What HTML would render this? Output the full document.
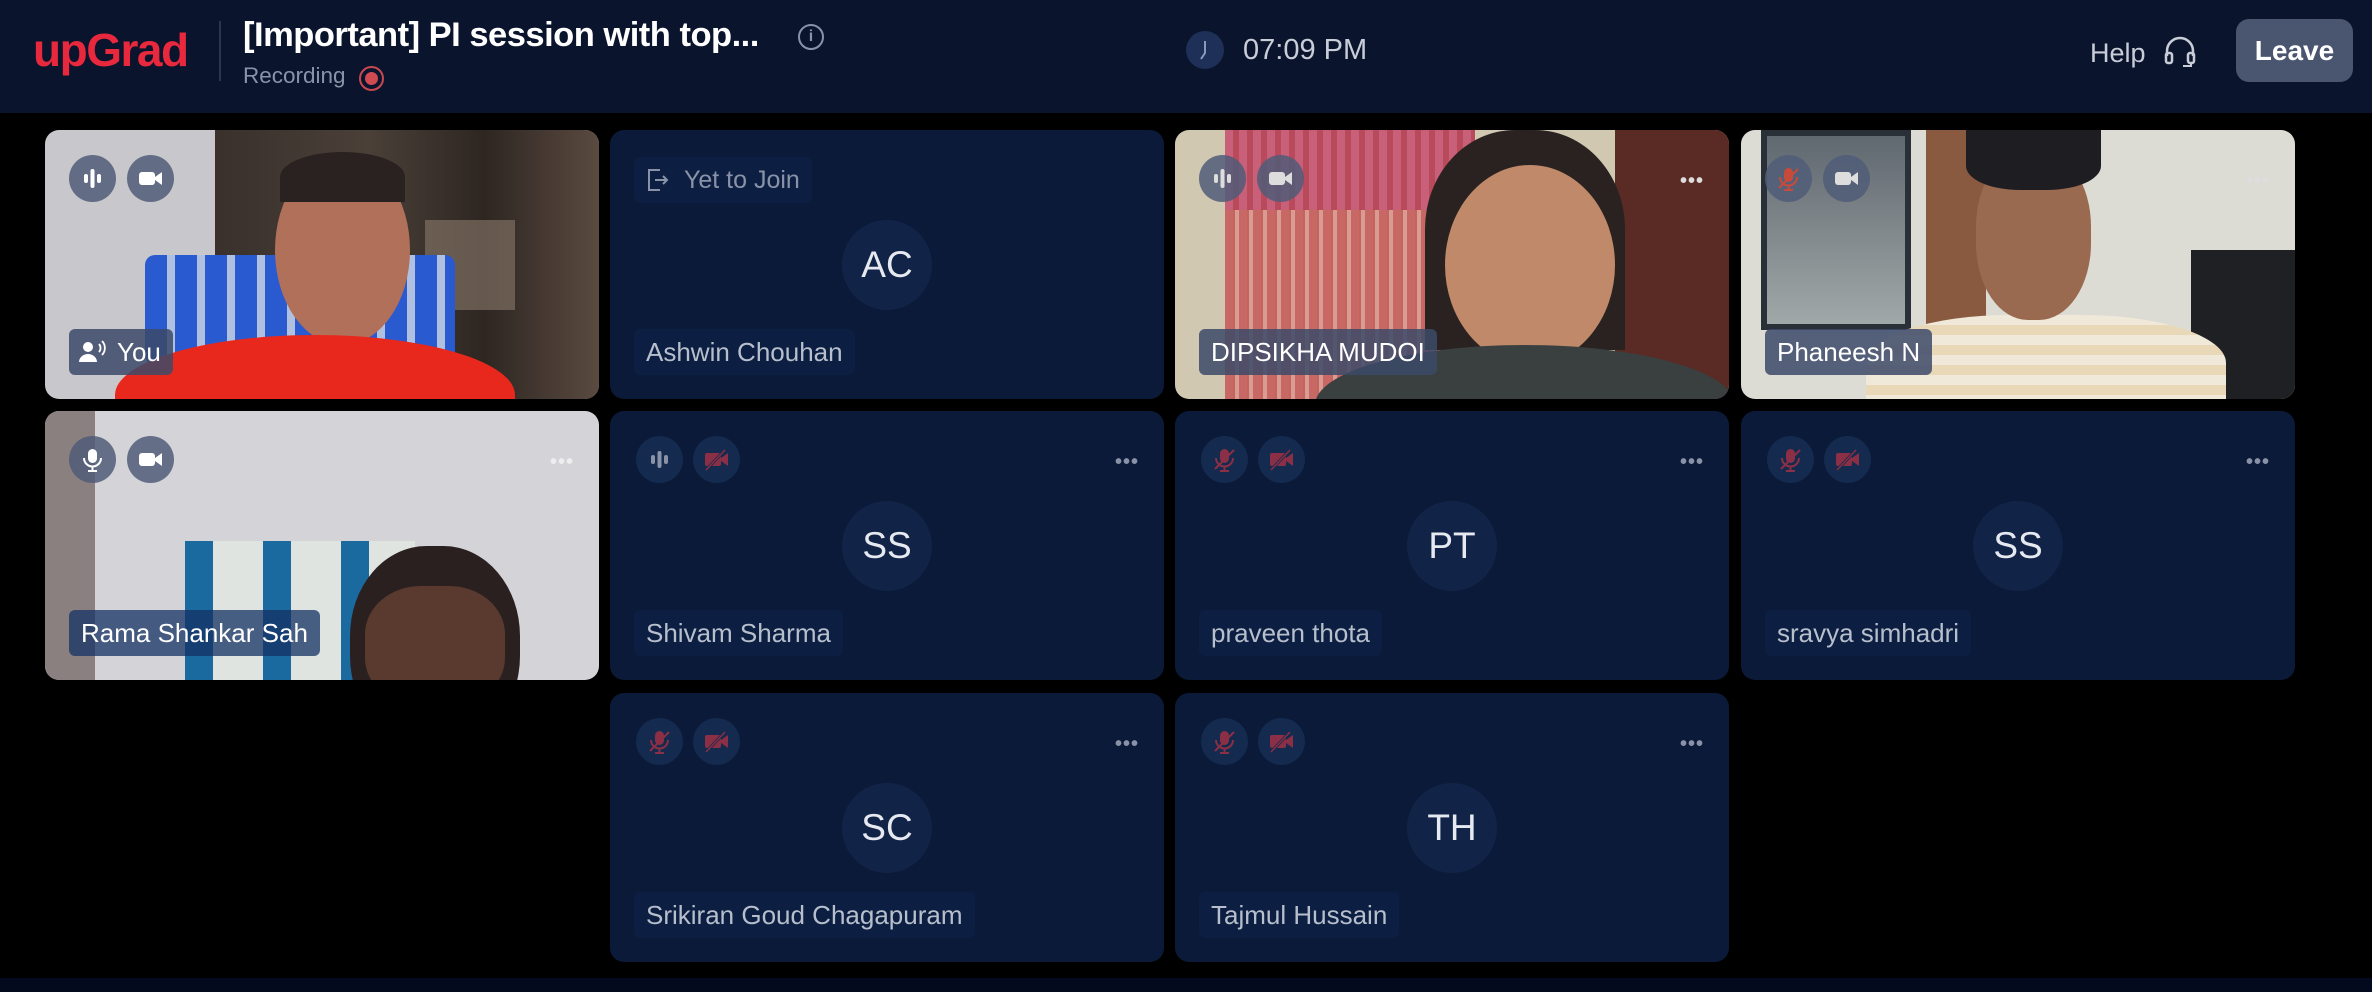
<!DOCTYPE html>
<html><head><meta charset="utf-8"><style>
*{margin:0;padding:0;box-sizing:border-box}
body{width:2372px;height:992px;background:#000;font-family:"Liberation Sans",sans-serif;position:relative;overflow:hidden}
.hdr{position:absolute;left:0;top:0;width:2372px;height:113px;background:#0a142c}
.logo{position:absolute;left:33px;top:23px;color:#e8283c;font-weight:bold;font-size:46px;letter-spacing:-1.5px}
.sep{position:absolute;left:219px;top:21px;width:2px;height:60px;background:#2a3550}
.title{position:absolute;left:243px;top:16px;color:#fff;font-size:34.5px;font-weight:bold;letter-spacing:-0.5px}
.info{position:absolute;left:798px;top:24px;width:26px;height:26px;border:2px solid #8a92a8;border-radius:50%;color:#8a92a8;font-size:16px;text-align:center;line-height:22px;font-weight:bold}
.rec{position:absolute;left:243px;top:63px;color:#8a92a8;font-size:22.5px}
.recdot{position:absolute;left:359px;top:66px;width:25px;height:25px;border:2px solid #c84850;border-radius:50%}
.recdot::after{content:"";position:absolute;left:4px;top:4px;width:13px;height:13px;background:#d04a52;border-radius:50%}
.clock{position:absolute;left:1186px;top:31px;width:38px;height:38px;border-radius:50%;background:#1e3058}
.time{position:absolute;left:1243px;top:34px;color:#c8cdd8;font-size:29px}
.help{position:absolute;left:2090px;top:36px;color:#c8cdd8;font-size:27px}
.leave{position:absolute;left:2236px;top:19px;width:117px;height:63px;background:#4a5570;border-radius:13px;color:#fff;font-size:28px;font-weight:bold;text-align:center;line-height:63px}
.tile{position:absolute;width:554px;height:269px;border-radius:14px;background:#0a1a38;overflow:hidden}
.ic{position:absolute;top:25px;width:47px;height:47px;border-radius:50%;background:#142a4e}
.ic svg{position:absolute;left:11px;top:11px}
.vid .ic{background:rgba(80,92,120,.85)}
.dots{position:absolute;left:505px;top:40px;color:#8a92a8;font-size:20px;letter-spacing:1px;font-weight:bold}
.av{position:absolute;left:232px;top:90px;width:90px;height:90px;border-radius:50%;background:#112448;color:#e6e9f0;font-size:37px;text-align:center;line-height:90px}
.nm{position:absolute;left:24px;top:199px;height:46px;padding:0 12px;background:#0c1f42;color:#b8bfcc;font-size:26px;line-height:46px;border-radius:6px}
.vid .nm{background:rgba(60,74,105,.85);color:#fff}
.b{position:absolute}
.bot{position:absolute;left:0;top:978px;width:2372px;height:14px;background:#040a1e}
</style></head><body>
<div class="hdr">
<div class="logo">upGrad</div><div class="sep"></div>
<div class="title">[Important] PI session with top...</div>
<div class="info">i</div>
<div class="rec">Recording</div><div class="recdot"></div>
<div class="clock"><svg width="38" height="38"><path d="M19 10 V22 L15 28" stroke="#8a9ab8" stroke-width="2" fill="none"/></svg></div>
<div class="time">07:09 PM</div>
<div class="help">Help <svg width="34" height="32" style="vertical-align:-6px;margin-left:10px"><path d="M4 20 V15 a13 13 0 0 1 26 0 V20" stroke="#c8cdd8" stroke-width="2.5" fill="none"/><rect x="3" y="17" width="6" height="10" rx="2" stroke="#c8cdd8" stroke-width="2.5" fill="none"/><rect x="25" y="17" width="6" height="10" rx="2" stroke="#c8cdd8" stroke-width="2.5" fill="none"/><path d="M28 27 v3 h-8" stroke="#c8cdd8" stroke-width="2" fill="none"/></svg></div>
<div class="leave">Leave</div>
</div>

<div class="tile vid" style="left:45px;top:130px;background:#c8c8cc">
<div class="b" style="left:170px;top:0;width:384px;height:269px;background:linear-gradient(90deg,#3a302c,#4a4038 40%,#2e2622 70%,#5a4a40)"></div>
<div class="b" style="left:380px;top:90px;width:90px;height:90px;background:#8a7a6a;opacity:.6"></div>
<div class="b" style="left:100px;top:125px;width:310px;height:110px;background:repeating-linear-gradient(90deg,#2a5ad0 0 22px,#b0c0e0 22px 30px);border-radius:10px"></div>
<div class="b" style="left:230px;top:25px;width:135px;height:190px;background:#b0705a;border-radius:50%"></div>
<div class="b" style="left:235px;top:22px;width:125px;height:50px;background:#2a2220;border-radius:50% 50% 0 0"></div>
<div class="b" style="left:70px;top:205px;width:400px;height:120px;background:#e8281c;border-radius:50% 50% 0 0"></div>
<div class="ic" style="left:24px"><svg width="25" height="25"><rect x="4" y="8" width="4" height="9" rx="2" fill="#fff"/><rect x="10.5" y="3" width="4" height="19" rx="2" fill="#fff"/><rect x="17" y="8" width="4" height="9" rx="2" fill="#fff"/></svg></div>
<div class="ic" style="left:82px"><svg width="25" height="25"><rect x="1" y="6" width="16" height="13" rx="3" fill="#fff"/><path d="M17 11 L24 6 V19 L17 14Z" fill="#fff"/></svg></div>
<div class="nm" style="padding-left:48px">You<svg width="30" height="24" style="position:absolute;left:10px;top:11px"><circle cx="9" cy="7" r="5" fill="#fff"/><path d="M0 22 a9 8 0 0 1 18 0Z" fill="#fff"/><path d="M20 4 a6 6 0 0 1 0 8 M23 1 a10 10 0 0 1 0 14" stroke="#fff" stroke-width="1.8" fill="none"/></svg></div>
</div>

<div class="tile" style="left:610px;top:130px">
<div class="nm" style="top:27px;padding-left:50px;color:#8a92a8;font-size:25px">Yet to Join<svg width="24" height="26" style="position:absolute;left:12px;top:10px"><path d="M14 3 H3 V23 H14" stroke="#8a92a8" stroke-width="2" fill="none"/><path d="M9 13 H21 M17 9 L21 13 L17 17" stroke="#8a92a8" stroke-width="2" fill="none"/></svg></div>
<div class="av">AC</div>
<div class="nm">Ashwin Chouhan</div>
</div>

<div class="tile vid" style="left:1175px;top:130px;background:#d0c8b0">
<div class="b" style="left:50px;top:0;width:250px;height:269px;background:repeating-linear-gradient(90deg,#c8607a 0 8px,#b84a5c 8px 14px)"></div>
<div class="b" style="left:50px;top:80px;width:250px;height:189px;background:repeating-linear-gradient(90deg,#c86a60 0 10px,#e0b0a0 10px 14px);opacity:.8"></div>
<div class="b" style="left:440px;top:0;width:114px;height:269px;background:#5a2a24"></div>
<div class="b" style="left:250px;top:0;width:200px;height:220px;background:#2a2220;border-radius:45% 45% 0 0"></div>
<div class="b" style="left:270px;top:35px;width:170px;height:200px;background:#c08a6a;border-radius:50%"></div>
<div class="b" style="left:140px;top:215px;width:420px;height:120px;background:#3a4040;border-radius:50% 50% 0 0"></div>
<div class="ic" style="left:24px"><svg width="25" height="25"><rect x="4" y="8" width="4" height="9" rx="2" fill="#ddd"/><rect x="10.5" y="3" width="4" height="19" rx="2" fill="#ddd"/><rect x="17" y="8" width="4" height="9" rx="2" fill="#ddd"/></svg></div>
<div class="ic" style="left:82px"><svg width="25" height="25"><rect x="1" y="6" width="16" height="13" rx="3" fill="#ddd"/><path d="M17 11 L24 6 V19 L17 14Z" fill="#ddd"/></svg></div>
<div class="dots" style="color:#ddd">•••</div>
<div class="nm">DIPSIKHA MUDOI</div>
</div>

<div class="tile vid" style="left:1741px;top:130px;background:#dcdcd4">
<div class="b" style="left:20px;top:0;width:150px;height:200px;background:linear-gradient(#606870,#a0a8a8);border:6px solid #2a3038"></div>
<div class="b" style="left:185px;top:0;width:60px;height:269px;background:#8a5a40"></div>
<div class="b" style="left:450px;top:120px;width:104px;height:149px;background:#1e2024"></div>
<div class="b" style="left:125px;top:185px;width:360px;height:120px;background:repeating-linear-gradient(0deg,#e8d8b8 0 10px,#f0e8d8 10px 20px);border-radius:40% 40% 0 0"></div>
<div class="b" style="left:235px;top:20px;width:115px;height:170px;background:#9a6a50;border-radius:45%"></div>
<div class="b" style="left:225px;top:0;width:135px;height:60px;background:#1e1e22;border-radius:0 0 40% 40%"></div>
<div class="ic" style="left:24px"><svg width="25" height="25"><rect x="8" y="2" width="9" height="14" rx="4.5" fill="#c84a3a"/><path d="M4 11 a8.5 8.5 0 0 0 17 0 M12.5 20 V24 M8 24 H17" stroke="#c84a3a" stroke-width="2" fill="none"/><path d="M3 22 L22 3" stroke="#c84a3a" stroke-width="2"/></svg></div>
<div class="ic" style="left:82px"><svg width="25" height="25"><rect x="1" y="6" width="16" height="13" rx="3" fill="#ddd"/><path d="M17 11 L24 6 V19 L17 14Z" fill="#ddd"/></svg></div>
<div class="dots" style="color:#ddd">•••</div>
<div class="nm">Phaneesh N</div>
</div>

<div class="tile vid" style="left:45px;top:411px;background:#d4d4d8">
<div class="b" style="left:0;top:0;width:50px;height:269px;background:#8a8080"></div>
<div class="b" style="left:140px;top:130px;width:230px;height:139px;background:repeating-linear-gradient(90deg,#1a6aa0 0 28px,#e0e4e0 28px 78px)"></div>
<div class="b" style="left:305px;top:135px;width:170px;height:200px;background:#2a2020;border-radius:45%"></div>
<div class="b" style="left:320px;top:175px;width:140px;height:120px;background:#5a3a2e;border-radius:40%"></div>
<div class="ic" style="left:24px"><svg width="25" height="25"><rect x="8" y="2" width="9" height="14" rx="4.5" fill="#fff"/><path d="M4 11 a8.5 8.5 0 0 0 17 0 M12.5 20 V24 M8 24 H17" stroke="#fff" stroke-width="2" fill="none"/></svg></div>
<div class="ic" style="left:82px"><svg width="25" height="25"><rect x="1" y="6" width="16" height="13" rx="3" fill="#fff"/><path d="M17 11 L24 6 V19 L17 14Z" fill="#fff"/></svg></div>
<div class="dots" style="color:#eee">•••</div>
<div class="nm" style="background:rgba(20,50,100,.75)">Rama Shankar Sah</div>
</div>

<div class="tile" style="left:610px;top:411px">
<div class="ic" style="left:26px"><svg width="25" height="25"><rect x="4" y="8" width="4" height="9" rx="2" fill="#8a92a8"/><rect x="10.5" y="4" width="4" height="17" rx="2" fill="#8a92a8"/><rect x="17" y="8" width="4" height="9" rx="2" fill="#8a92a8"/></svg></div>
<div class="ic" style="left:83px"><svg width="25" height="25"><rect x="1" y="6" width="16" height="13" rx="2" fill="#8a2f45"/><path d="M17 11 L24 6 V19 L17 14Z" fill="#8a2f45"/><path d="M2 23 L21 3" stroke="#142a4e" stroke-width="3"/><path d="M2 23 L21 3" stroke="#8a2f45" stroke-width="1.5"/></svg></div>
<div class="dots">•••</div>
<div class="av">SS</div>
<div class="nm">Shivam Sharma</div>
</div>

<div class="tile" style="left:1175px;top:411px">
<div class="ic" style="left:26px"><svg width="25" height="25"><rect x="8" y="2" width="9" height="14" rx="4.5" fill="#8a2f45"/><path d="M4 11 a8.5 8.5 0 0 0 17 0 M12.5 20 V24 M8 24 H17" stroke="#8a2f45" stroke-width="2" fill="none"/><path d="M3 22 L22 3" stroke="#8a2f45" stroke-width="2"/></svg></div>
<div class="ic" style="left:83px"><svg width="25" height="25"><rect x="1" y="6" width="16" height="13" rx="2" fill="#8a2f45"/><path d="M17 11 L24 6 V19 L17 14Z" fill="#8a2f45"/><path d="M2 23 L21 3" stroke="#142a4e" stroke-width="3"/><path d="M2 23 L21 3" stroke="#8a2f45" stroke-width="1.5"/></svg></div>
<div class="dots">•••</div>
<div class="av">PT</div>
<div class="nm">praveen thota</div>
</div>

<div class="tile" style="left:1741px;top:411px">
<div class="ic" style="left:26px"><svg width="25" height="25"><rect x="8" y="2" width="9" height="14" rx="4.5" fill="#8a2f45"/><path d="M4 11 a8.5 8.5 0 0 0 17 0 M12.5 20 V24 M8 24 H17" stroke="#8a2f45" stroke-width="2" fill="none"/><path d="M3 22 L22 3" stroke="#8a2f45" stroke-width="2"/></svg></div>
<div class="ic" style="left:83px"><svg width="25" height="25"><rect x="1" y="6" width="16" height="13" rx="2" fill="#8a2f45"/><path d="M17 11 L24 6 V19 L17 14Z" fill="#8a2f45"/><path d="M2 23 L21 3" stroke="#142a4e" stroke-width="3"/><path d="M2 23 L21 3" stroke="#8a2f45" stroke-width="1.5"/></svg></div>
<div class="dots">•••</div>
<div class="av">SS</div>
<div class="nm">sravya simhadri</div>
</div>

<div class="tile" style="left:610px;top:693px">
<div class="ic" style="left:26px"><svg width="25" height="25"><rect x="8" y="2" width="9" height="14" rx="4.5" fill="#8a2f45"/><path d="M4 11 a8.5 8.5 0 0 0 17 0 M12.5 20 V24 M8 24 H17" stroke="#8a2f45" stroke-width="2" fill="none"/><path d="M3 22 L22 3" stroke="#8a2f45" stroke-width="2"/></svg></div>
<div class="ic" style="left:83px"><svg width="25" height="25"><rect x="1" y="6" width="16" height="13" rx="2" fill="#8a2f45"/><path d="M17 11 L24 6 V19 L17 14Z" fill="#8a2f45"/><path d="M2 23 L21 3" stroke="#142a4e" stroke-width="3"/><path d="M2 23 L21 3" stroke="#8a2f45" stroke-width="1.5"/></svg></div>
<div class="dots">•••</div>
<div class="av">SC</div>
<div class="nm">Srikiran Goud Chagapuram</div>
</div>

<div class="tile" style="left:1175px;top:693px">
<div class="ic" style="left:26px"><svg width="25" height="25"><rect x="8" y="2" width="9" height="14" rx="4.5" fill="#8a2f45"/><path d="M4 11 a8.5 8.5 0 0 0 17 0 M12.5 20 V24 M8 24 H17" stroke="#8a2f45" stroke-width="2" fill="none"/><path d="M3 22 L22 3" stroke="#8a2f45" stroke-width="2"/></svg></div>
<div class="ic" style="left:83px"><svg width="25" height="25"><rect x="1" y="6" width="16" height="13" rx="2" fill="#8a2f45"/><path d="M17 11 L24 6 V19 L17 14Z" fill="#8a2f45"/><path d="M2 23 L21 3" stroke="#142a4e" stroke-width="3"/><path d="M2 23 L21 3" stroke="#8a2f45" stroke-width="1.5"/></svg></div>
<div class="dots">•••</div>
<div class="av">TH</div>
<div class="nm">Tajmul Hussain</div>
</div>

<div class="bot"></div>
</body></html>
